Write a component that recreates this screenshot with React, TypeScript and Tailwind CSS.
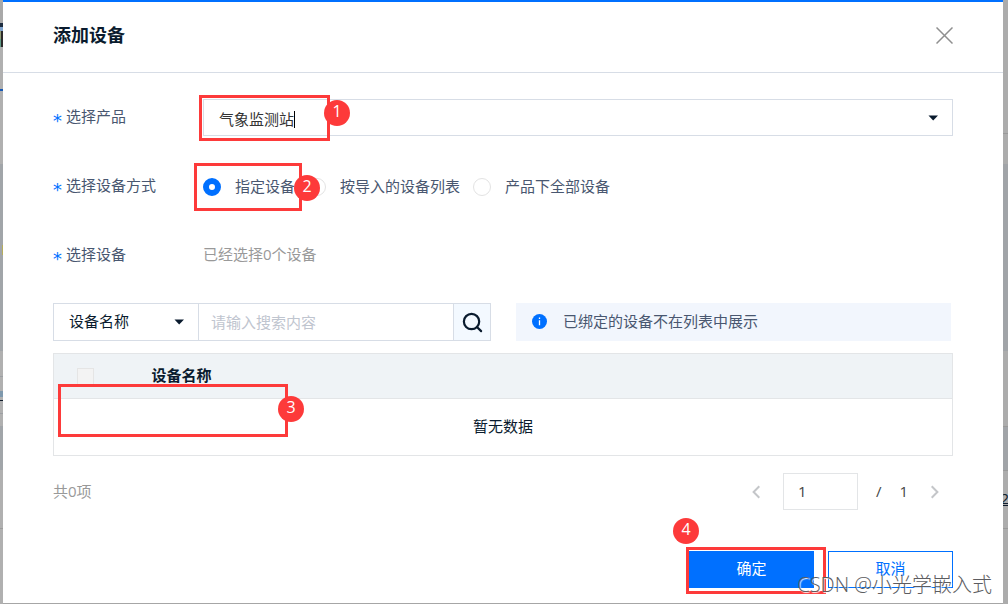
import type { ReactNode } from "react"
import { Search } from "lucide-react"

type Band = { height: string; color: string }

const leftBands: Band[] = [
  { height: "h-[23px]", color: "bg-[#a9a9a9]" },
  { height: "h-[4px]", color: "bg-[#1c2c40]" },
  { height: "h-[4px]", color: "bg-[#7fa3cc]" },
  { height: "h-[8px]", color: "bg-[#8f9a74] border-r-2 border-[#2c2a2a]" },
  { height: "h-[8px]", color: "bg-[#5f9a86] border-r-2 border-[#2c2a2a]" },
  { height: "h-[42px]", color: "bg-[#b0b0b0]" },
  { height: "h-[2px]", color: "bg-[#1659b5]" },
  { height: "h-[73px]", color: "bg-[#b0b0b0]" },
  { height: "h-[81px]", color: "bg-[#a1a5a9]" },
  { height: "h-[10px]", color: "bg-[#a1a5a9] border-r border-[#b5ad5c]" },
  { height: "h-[96px]", color: "bg-[#a1a5a9]" },
  { height: "h-[25px]", color: "bg-[#b0b0b0]" },
  { height: "h-px", color: "bg-[#9c9fa3]" },
  { height: "h-[14px]", color: "bg-[#b0b0b0]" },
  { height: "h-[6px]", color: "bg-[#7f99ad]" },
  { height: "h-[3px]", color: "bg-[#b0b0b0]" },
  { height: "h-px", color: "bg-[#0f1c2b]" },
  { height: "h-[12px]", color: "bg-[#b0b0b0]" },
  { height: "h-px", color: "bg-[#9c9fa3]" },
  { height: "h-[12px]", color: "bg-[#b0b0b0]" },
  { height: "h-[44px]", color: "bg-[#a1a5a9]" },
  { height: "h-[58px]", color: "bg-[#b0b0b0]" },
  { height: "h-px", color: "bg-[#9c9c9c]" },
  { height: "grow", color: "bg-[#b0b0b0]" },
]

const rightBands: Band[] = [
  { height: "h-[133px]", color: "bg-[#acacac]" },
  { height: "h-px", color: "bg-[#999999]" },
  { height: "h-[30px]", color: "bg-[#acacac]" },
  { height: "h-[187px]", color: "bg-[#a1a4a8]" },
  { height: "h-[75px]", color: "bg-[#acacac]" },
  { height: "h-px", color: "bg-[#999999]" },
  { height: "h-[43px]", color: "bg-[#a1a4a8]" },
  { height: "h-px", color: "bg-[#999999]" },
  { height: "h-[57px]", color: "bg-[#acacac]" },
  { height: "h-px", color: "bg-[#999999]" },
  { height: "grow", color: "bg-[#acacac]" },
]

const selectModes = ["指定设备", "按导入的设备列表", "产品下全部设备"]

function Backdrop({ bands }: { bands: Band[] }) {
  return (
    <div className="flex flex-col" aria-hidden="true">
      {bands.map((band, i) => (
        <div key={i} className={`${band.height} ${band.color}`} />
      ))}
    </div>
  )
}

function CaretDown({ className = "" }: { className?: string }) {
  return (
    <svg viewBox="0 0 10 6" className={`h-[6px] w-[10px] ${className}`}>
      <path d="M0.5 0.5h9.5L5.2 5.5z" fill="#0a1b2e" />
    </svg>
  )
}

function Mark({ className }: { className: string }) {
  return (
    <span
      className={`pointer-events-none absolute z-10 border-3 border-[#fd3a3a] ${className}`}
    />
  )
}

function Badge({ n, className }: { n: number; className: string }) {
  return (
    <span
      className={`pointer-events-none absolute z-20 grid size-[26px] place-items-center rounded-full bg-[#fd3a3a] pb-1 text-base leading-none text-white ${className}`}
    >
      {n}
    </span>
  )
}

function Star() {
  return (
    <span className="-ml-px w-[10px] pt-1.5 font-[DejaVu_Sans_Mono] text-lg leading-5 text-[#0070ff]">
      *
    </span>
  )
}

function FieldRow({
  label,
  htmlFor,
  children,
}: {
  label: string
  htmlFor?: string
  children: ReactNode
}) {
  return (
    <div className="grid h-[37px] grid-cols-[150px_1fr] items-center">
      <label htmlFor={htmlFor} className="flex items-center gap-1">
        <Star />
        <span className="pb-1">{label}</span>
      </label>
      {children}
    </div>
  )
}

function Chevron({ flip = false }: { flip?: boolean }) {
  return (
    <svg
      viewBox="0 0 8 14"
      className={`h-[14px] w-[8px] ${flip ? "-scale-x-100" : ""}`}
    >
      <path d="M7.3 1.3L1.6 7L7.3 12.7" fill="none" stroke="#c4c6c9" strokeWidth="2" />
    </svg>
  )
}

export default function App() {
  return (
    <div className="relative grid min-h-screen grid-cols-[3px_1fr_5px] overflow-hidden bg-[#a6a6a6] font-['Open_Sans','Noto_Sans_CJK_SC',sans-serif] text-[15px] leading-5 text-[#495770]">
      <Backdrop bands={leftBands} />
      <main
        role="dialog"
        aria-labelledby="title"
        className="relative z-10 mb-px border-t-2 border-[#0070ff] bg-white"
      >
        <header className="flex h-[71px] items-center justify-between border-b border-[#d7dde6] px-[50px] pb-1">
          <h1 id="title" className="text-lg font-bold text-[#0a1b2e]">
            添加设备
          </h1>
          <button type="button" aria-label="关闭">
            <svg viewBox="0 0 17 17" className="size-[17px]">
              <path d="M0.5 0.5L16.5 16.5M16.5 0.5L0.5 16.5" stroke="#8f8f8f" strokeWidth="1.5" />
            </svg>
          </button>
        </header>

        <div className="px-[50px] pt-[26px]">
          <div className="flex flex-col gap-8">
            <FieldRow label="选择产品" htmlFor="product">
              <div className="relative flex h-full items-center border border-[#d7dde6] pl-[15px] pr-3.5">
                <input
                  id="product"
                  defaultValue="气象监测站"
                  className="w-[75px] pt-0.5 text-[#333333] outline-none"
                />
                <span className="mt-1 h-[17px] w-px bg-black" />
                <CaretDown className="ml-auto" />
                <Mark className="-top-[5px] -left-[5px] h-[46px] w-[131px]" />
                <Badge n={1} className="top-0 left-[120px]" />
              </div>
            </FieldRow>

            <FieldRow label="选择设备方式">
              <div className="relative flex h-full items-center gap-[13px]">
                {selectModes.map((mode, i) => (
                  <label key={mode} className="flex items-center gap-3.5">
                    <input
                      type="radio"
                      name="mode"
                      defaultChecked={i === 0}
                      className="size-[18px] appearance-none rounded-full border border-[#e3e3e3] checked:border-[6px] checked:border-[#0070ff]"
                    />
                    <span className="pb-0.5">{mode}</span>
                  </label>
                ))}
                <Mark className="-top-[5px] -left-[9px] h-[48px] w-[108px]" />
                <Badge n={2} className="top-[7px] left-[91px]" />
              </div>
            </FieldRow>

            <FieldRow label="选择设备">
              <p className="pb-1 text-[#999999]">已经选择0个设备</p>
            </FieldRow>
          </div>

          <div className="mt-[29px] flex h-[38px]">
            <div className="relative w-[145px]">
              <select
                aria-label="搜索字段"
                className="size-full appearance-none border border-r-0 border-[#d7dde6] px-[15px] pb-0.5 text-[#0a1b2e]"
              >
                <option>设备名称</option>
              </select>
              <CaretDown className="pointer-events-none absolute top-4 right-3.5" />
            </div>
            <input
              aria-label="搜索内容"
              placeholder="请输入搜索内容"
              className="w-[255px] border border-r-0 border-[#d7dde6] px-3 placeholder:text-[#bfc5cf]"
            />
            <button
              type="button"
              aria-label="搜索"
              className="grid w-[38px] place-items-center border border-[#d7dde6] bg-[#f3f9ff]"
            >
              <Search className="size-[23px] text-[#0a1b2e]" strokeWidth={2.3} />
            </button>
            <div className="mr-0.5 ml-[25px] flex grow items-center gap-4 bg-[#f2f6fd] pb-0.5 pl-4">
              <svg viewBox="0 0 15 15" className="size-[15px]">
                <circle cx="7.5" cy="7.5" r="7.5" fill="#0070ff" />
                <path d="M7.5 3.5v1.6M7.5 6.3v5" stroke="#fff" strokeWidth="1.3" />
              </svg>
              <span>已绑定的设备不在列表中展示</span>
            </div>
          </div>

          <div className="relative mt-3">
            <table className="w-full border-collapse border border-[#e3e5e7] text-[#0a1b2e]">
              <thead>
                <tr className="h-[45px] border-b border-[#e3e5e7] bg-[#eff3f6]">
                  <th className="w-[86px] pl-[23px] text-left">
                    <input
                      type="checkbox"
                      aria-label="全选"
                      className="block size-[17px] appearance-none border border-[#e5e5e5] bg-[#f3f3f3]"
                    />
                  </th>
                  <th className="pb-0.5 pl-3 text-left font-bold">设备名称</th>
                </tr>
              </thead>
              <tbody>
                <tr className="h-[57px]">
                  <td colSpan={2} className="pb-0.5 text-center">
                    暂无数据
                  </td>
                </tr>
              </tbody>
            </table>
            <Mark className="top-[31px] left-[5px] h-[53px] w-[230px]" />
            <Badge n={3} className="top-[43px] left-[225px]" />
          </div>

          <div className="mt-[17px] flex h-[37px] items-center justify-between pr-3.5 text-[#999999]">
            <span className="pb-0.5">共0项</span>
            <nav aria-label="分页" className="flex items-center gap-[23px]">
              <button type="button" aria-label="上一页">
                <Chevron />
              </button>
              <span className="flex items-center gap-[18px] text-[#444444]">
                <input
                  aria-label="页码"
                  defaultValue="1"
                  className="h-[37px] w-[75px] border border-[#e3e5e7] px-3.5 pb-0.5"
                />
                <span className="pb-0.5">/</span>
                <span className="pb-0.5">1</span>
              </span>
              <button type="button" aria-label="下一页">
                <Chevron flip />
              </button>
            </nav>
          </div>
        </div>

        <footer className="mt-[41px] flex justify-end gap-3.5 px-[50px] pb-[15px]">
          <div className="relative">
            <button
              type="button"
              className="block h-[37px] w-[125px] bg-[#0070ff] pb-1 text-white"
            >
              确定
            </button>
            <Mark className="-top-1 -left-[3px] h-[47px] w-[140px]" />
            <Badge n={4} className="-top-[33px] -left-4" />
          </div>
          <button
            type="button"
            className="h-[37px] w-[125px] border border-[#0070ff] pb-1 text-[#0070ff]"
          >
            取消
          </button>
        </footer>

        <span className="absolute right-[11px] bottom-1 z-30 text-xl leading-7 font-light text-[#5c5c60] [text-shadow:1px_1px_1px_#fff]">
          CSDN @小光学嵌入式
        </span>
      </main>
      <Backdrop bands={rightBands} />
      <span className="absolute top-[488px] -right-px text-[#0f1c2b] underline">
        2
      </span>
    </div>
  )
}
